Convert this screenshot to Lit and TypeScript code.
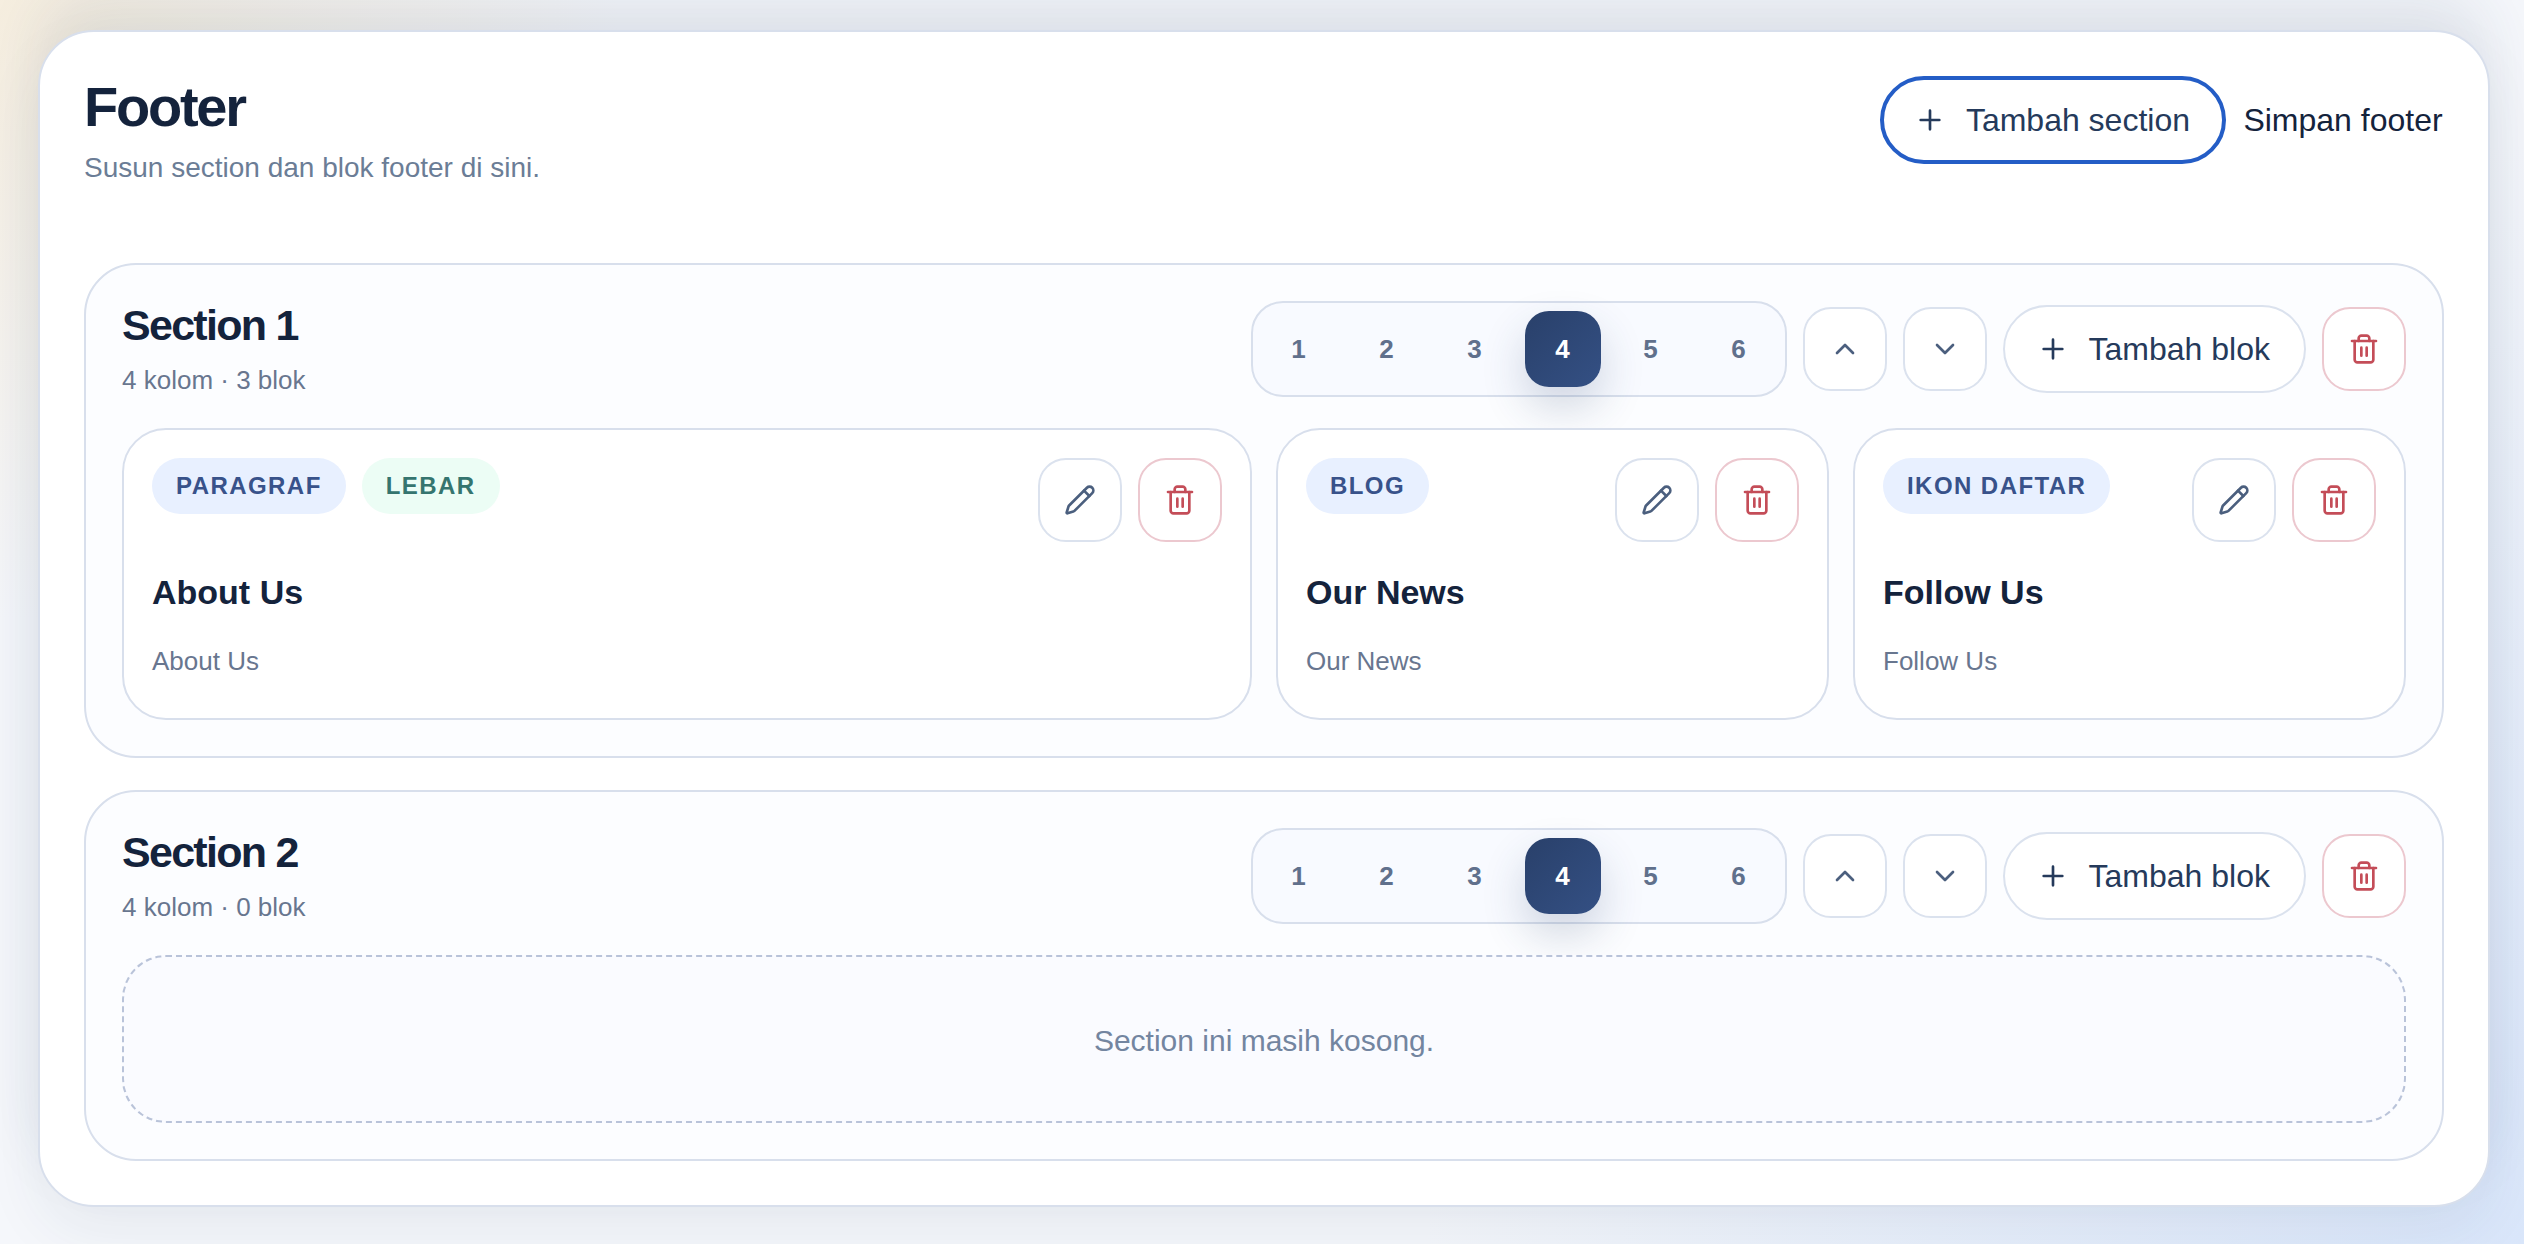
import { LitElement, html, css, svg, nothing, type TemplateResult } from "lit";
import { customElement, property, state } from "lit/decorators.js";
import { classMap } from "lit/directives/class-map.js";

const icons = {
  plus: svg`<path d="M5 12h14M12 5v14" />`,
  up: svg`<path d="m18 15-6-6-6 6" />`,
  down: svg`<path d="m6 9 6 6 6-6" />`,
  pencil: svg`<path d="M21.174 6.812a1 1 0 0 0-3.986-3.987L3.842 16.174a2 2 0 0 0-.5.83l-1.321 4.352a.5.5 0 0 0 .623.622l4.353-1.32a2 2 0 0 0 .83-.497z" /><path d="m15 5 4 4" />`,
  trash: svg`<path d="M3 6h18" /><path d="M19 6v14c0 1-1 2-2 2H7c-1 0-2-1-2-2V6" /><path d="M8 6V4c0-1 1-2 2-2h4c1 0 2 1 2 2v2" /><path d="M10 11v6M14 11v6" />`,
};

const icon = (name: keyof typeof icons): TemplateResult =>
  html`<svg class="icon" viewBox="0 0 24 24" aria-hidden="true">${icons[name]}</svg>`;

interface Block {
  kind: string;
  title: string;
  text: string;
  wide?: boolean;
}

interface Section {
  id: number;
  columns: number;
  blocks: Block[];
}

const controls = css`
  * {
    box-sizing: border-box;
    margin: 0;
  }
  button {
    font: inherit;
    color: inherit;
    background: none;
    border: 0;
    padding: 0;
    cursor: pointer;
  }
  .icon {
    width: 32px;
    height: 32px;
    flex: none;
    fill: none;
    stroke: currentColor;
    stroke-width: 2;
    stroke-linecap: round;
    stroke-linejoin: round;
  }
  .pill {
    display: flex;
    align-items: center;
    gap: 20px;
    height: 88px;
    padding: 0 34px 0 32px;
    border: 2px solid #dbe2ee;
    border-radius: 44px;
    background: #fff;
    color: #253a5b;
    font-size: 32px;
    white-space: nowrap;
  }
  .square {
    display: grid;
    place-items: center;
    width: 84px;
    height: 84px;
    border: 2px solid #dbe2ee;
    border-radius: 28px;
    background: #fff;
    color: #4b5f7e;
  }
  .danger {
    border-color: #ecc8cf;
    color: #c44d58;
  }
  .actions {
    display: flex;
    align-items: center;
    gap: 16px;
  }
`;

@customElement("footer-block")
export class FooterBlock extends LitElement {
  static styles = [
    controls,
    css`
      :host {
        display: block;
        min-width: 0;
      }
      .card {
        box-sizing: border-box;
        min-height: 292px;
        padding: 28px;
        border: 2px solid #d8dfec;
        border-radius: 44px;
        background: #fff;
      }
      .top {
        display: flex;
        align-items: flex-start;
        justify-content: space-between;
        gap: 16px;
      }
      .chips {
        display: flex;
        flex-wrap: wrap;
        gap: 16px;
      }
      .chip {
        height: 56px;
        padding: 0 24px;
        border-radius: 28px;
        background: #e8f0ff;
        color: #38528a;
        font-size: 24px;
        font-weight: 700;
        line-height: 56px;
        letter-spacing: 0.06em;
        text-transform: uppercase;
      }
      .wide {
        background: #ecfdf5;
        color: #35756f;
      }
      .title {
        margin-top: 28px;
        color: #14233c;
        font-size: 34px;
        font-weight: 700;
        line-height: 44px;
      }
      .text {
        margin-top: 26px;
        color: #68768f;
        font-size: 26px;
        line-height: 42px;
      }
    `,
  ];

  @property({ attribute: false }) block!: Block;

  render() {
    const { kind, title, text, wide } = this.block;
    return html`
      <article class="card">
        <div class="top">
          <div class="chips">
            <span class="chip">${kind}</span>
            ${wide ? html`<span class="chip wide">Lebar</span>` : nothing}
          </div>
          <div class="actions">
            <button class="square" type="button" aria-label="Edit blok">${icon("pencil")}</button>
            <button class="square danger" type="button" aria-label="Hapus blok">${icon("trash")}</button>
          </div>
        </div>
        <h4 class="title">${title}</h4>
        <p class="text">${text}</p>
      </article>
    `;
  }
}

@customElement("footer-section")
export class FooterSection extends LitElement {
  static styles = [
    controls,
    css`
      :host {
        display: block;
      }
      .section {
        display: flex;
        flex-direction: column;
        gap: 31px;
        padding: 36px;
        border: 2px solid #d8dfec;
        border-radius: 52px;
        background: #fcfdff;
      }
      .head {
        display: flex;
        align-items: center;
        justify-content: space-between;
        gap: 24px;
      }
      .name {
        color: #14233c;
        font-size: 43px;
        font-weight: 700;
        line-height: 48px;
        letter-spacing: -0.04em;
      }
      .meta {
        margin-top: 14px;
        color: #68768f;
        font-size: 26px;
        line-height: 34px;
      }
      .picker {
        display: flex;
        gap: 12px;
        padding: 8px;
        border: 2px solid #d8dfec;
        border-radius: 32px;
        background: #f8faff;
      }
      .count {
        width: 76px;
        height: 76px;
        border-radius: 24px;
        color: #60708c;
        font-size: 26px;
        font-weight: 700;
      }
      .active {
        color: #fff;
        background: linear-gradient(135deg, #29406a, #345084);
        box-shadow: 0 20px 44px rgba(41, 64, 106, 0.2);
      }
      .grid {
        display: grid;
        gap: 24px;
      }
      .cols1 { grid-template-columns: minmax(0, 1fr); }
      .cols2 { grid-template-columns: repeat(2, minmax(0, 1fr)); }
      .cols3 { grid-template-columns: repeat(3, minmax(0, 1fr)); }
      .cols4 { grid-template-columns: repeat(4, minmax(0, 1fr)); }
      .cols5 { grid-template-columns: repeat(5, minmax(0, 1fr)); }
      .cols6 { grid-template-columns: repeat(6, minmax(0, 1fr)); }
      .span {
        grid-column: span 2;
      }
      .empty {
        padding: 62px 24px 58px;
        border: 2px dashed #b9c3d9;
        border-radius: 44px;
        background: #fafbff;
        color: #7385a0;
        font-size: 30px;
        line-height: 44px;
        text-align: center;
      }
    `,
  ];

  @property({ attribute: false }) section!: Section;
  @state() private columns?: number;

  render() {
    const { id, blocks } = this.section;
    const columns = this.columns ?? this.section.columns;
    return html`
      <section class="section">
        <header class="head">
          <div>
            <h3 class="name">Section ${id}</h3>
            <p class="meta">${columns} kolom · ${blocks.length} blok</p>
          </div>
          <div class="actions">
            <div class="picker" role="group" aria-label="Jumlah kolom">
              ${[1, 2, 3, 4, 5, 6].map(
                (n) => html`<button
                  class=${classMap({ count: true, active: n === columns })}
                  type="button"
                  aria-pressed=${n === columns}
                  @click=${() => (this.columns = n)}
                >${n}</button>`,
              )}
            </div>
            <button class="square" type="button" aria-label="Naikkan section">${icon("up")}</button>
            <button class="square" type="button" aria-label="Turunkan section">${icon("down")}</button>
            <button class="pill" type="button">${icon("plus")}<span>Tambah blok</span></button>
            <button class="square danger" type="button" aria-label="Hapus section">${icon("trash")}</button>
          </div>
        </header>
        ${blocks.length
          ? html`<div class="grid cols${columns}">
              ${blocks.map(
                (b) => html`<footer-block
                  class=${classMap({ span: !!b.wide && columns > 1 })}
                  .block=${b}
                ></footer-block>`,
              )}
            </div>`
          : html`<p class="empty">Section ini masih kosong.</p>`}
      </section>
    `;
  }
}

@customElement("app-root")
export class AppRoot extends LitElement {
  static styles = [
    controls,
    css`
      :host {
        display: block;
        box-sizing: border-box;
        min-height: 100vh;
        padding: 30px 34px 37px 38px;
        overflow: hidden;
        font-family: "Helvetica Neue", "Liberation Sans", Arial, sans-serif;
        color: #14233c;
        background:
          radial-gradient(circle at 0 0, rgba(246, 233, 208, 0.65), rgba(246, 233, 208, 0) 620px),
          radial-gradient(circle at 100% 100%, rgba(214, 228, 250, 0.9), rgba(214, 228, 250, 0) 1100px),
          #f5f7fb;
      }
      .panel {
        padding: 44px;
        border: 2px solid #d8dfec;
        border-radius: 56px;
        background: #fff;
        box-shadow:
          0 24px 60px rgba(30, 50, 90, 0.07),
          0 -40px 60px rgba(30, 50, 90, 0.09);
      }
      .head {
        display: flex;
        align-items: flex-start;
        justify-content: space-between;
        gap: 24px;
        margin-bottom: 73px;
      }
      .title {
        font-size: 56px;
        font-weight: 700;
        line-height: 62px;
        letter-spacing: -0.04em;
      }
      .lead {
        margin-top: 8px;
        color: #6b7d96;
        font-size: 28px;
        line-height: 44px;
      }
      .focused {
        padding: 0 32px 0 30px;
        border: 4px solid #245dc6;
      }
      .save {
        min-width: 202px;
        height: 88px;
        font-size: 32px;
        white-space: nowrap;
      }
      .list {
        display: flex;
        flex-direction: column;
        gap: 32px;
      }
    `,
  ];

  @state() private sections: Section[] = [
    {
      id: 1,
      columns: 4,
      blocks: [
        { kind: "Paragraf", title: "About Us", text: "About Us", wide: true },
        { kind: "Blog", title: "Our News", text: "Our News" },
        { kind: "Ikon daftar", title: "Follow Us", text: "Follow Us" },
      ],
    },
    { id: 2, columns: 4, blocks: [] },
  ];

  private addSection() {
    this.sections = [...this.sections, { id: this.sections.length + 1, columns: 4, blocks: [] }];
  }

  render() {
    return html`
      <main class="panel">
        <header class="head">
          <div>
            <h2 class="title">Footer</h2>
            <p class="lead">Susun section dan blok footer di sini.</p>
          </div>
          <div class="actions">
            <button class="pill focused" type="button" @click=${this.addSection}>
              ${icon("plus")}<span>Tambah section</span>
            </button>
            <button class="save" type="button">Simpan footer</button>
          </div>
        </header>
        <div class="list">
          ${this.sections.map((s) => html`<footer-section .section=${s}></footer-section>`)}
        </div>
      </main>
    `;
  }
}
